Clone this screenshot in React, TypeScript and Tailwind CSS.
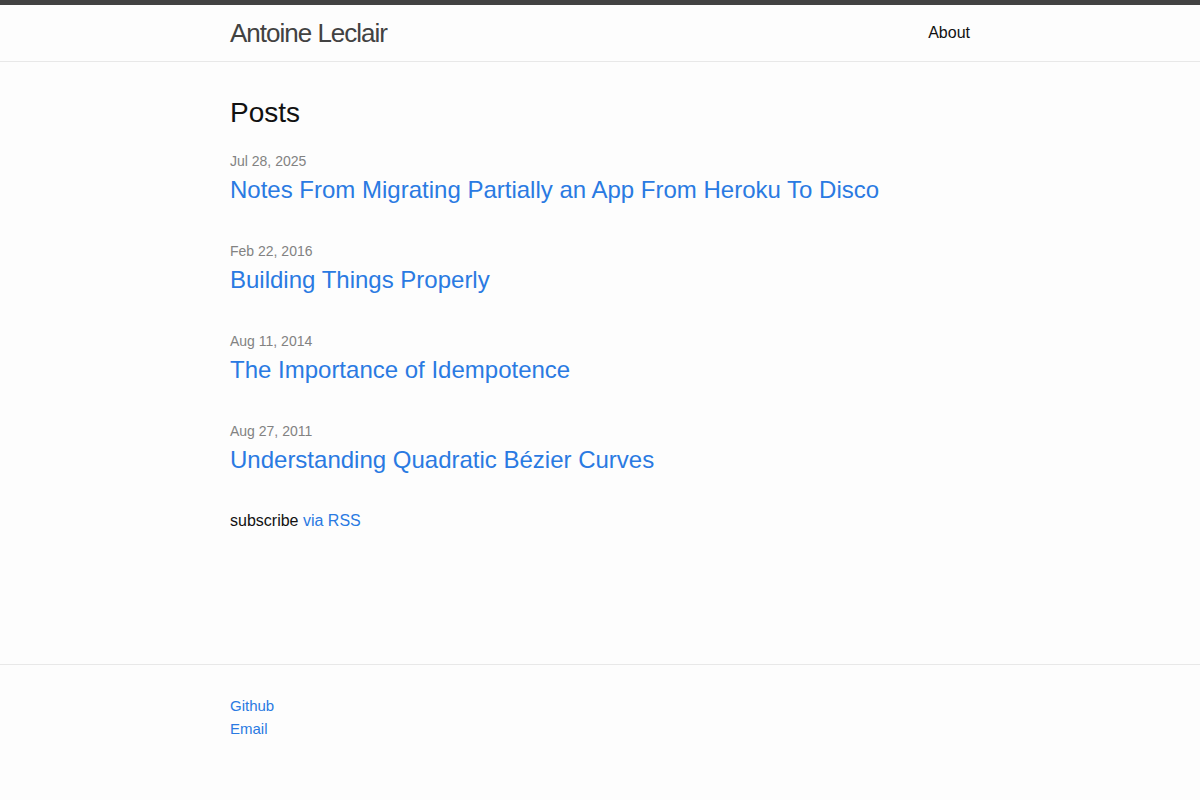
const posts = [
  { date: "Jul 28, 2025", title: "Notes From Migrating Partially an App From Heroku To Disco" },
  { date: "Feb 22, 2016", title: "Building Things Properly" },
  { date: "Aug 11, 2014", title: "The Importance of Idempotence" },
  { date: "Aug 27, 2011", title: "Understanding Quadratic Bézier Curves" },
];

export default function App() {
  return (
    <div className="flex min-h-screen flex-col bg-[#fdfdfd] text-[16px] leading-[1.5] text-[#111] [font-family:'Liberation_Sans',Arial,sans-serif]">
      <header className="border-t-[5px] border-b border-t-[#424242] border-b-[#e8e8e8]">
        <div className="mx-auto flex h-[56px] w-[740px] items-center justify-between">
          <a href="#" className="text-[26px] font-light tracking-[-1px] text-[#424242]">
            Antoine Leclair
          </a>
          <nav>
            <a href="#" className="text-[#111]">
              About
            </a>
          </nav>
        </div>
      </header>

      <main className="flex-1 py-[30px]">
        <div className="mx-auto w-[740px]">
          <h1 className="mb-[17px] text-[28px]">Posts</h1>
          <ul className="mb-[31px] space-y-[33px]">
            {posts.map((p) => (
              <li key={p.title}>
                <span className="block text-[14px] text-[#828282]">{p.date}</span>
                <h3>
                  <a href="#" className="block text-[24px] text-[#2a7ae2]">
                    {p.title}
                  </a>
                </h3>
              </li>
            ))}
          </ul>
          <p>
            subscribe{" "}
            <a href="#" className="text-[#2a7ae2]">
              via RSS
            </a>
          </p>
        </div>
      </main>

      <footer className="h-[136px] border-t border-[#e8e8e8] pt-[30px]">
        <div className="mx-auto w-[740px] text-[15px]">
          <a href="#" className="block text-[#2a7ae2]">
            Github
          </a>
          <a href="#" className="block text-[#2a7ae2]">
            Email
          </a>
        </div>
      </footer>
    </div>
  );
}
